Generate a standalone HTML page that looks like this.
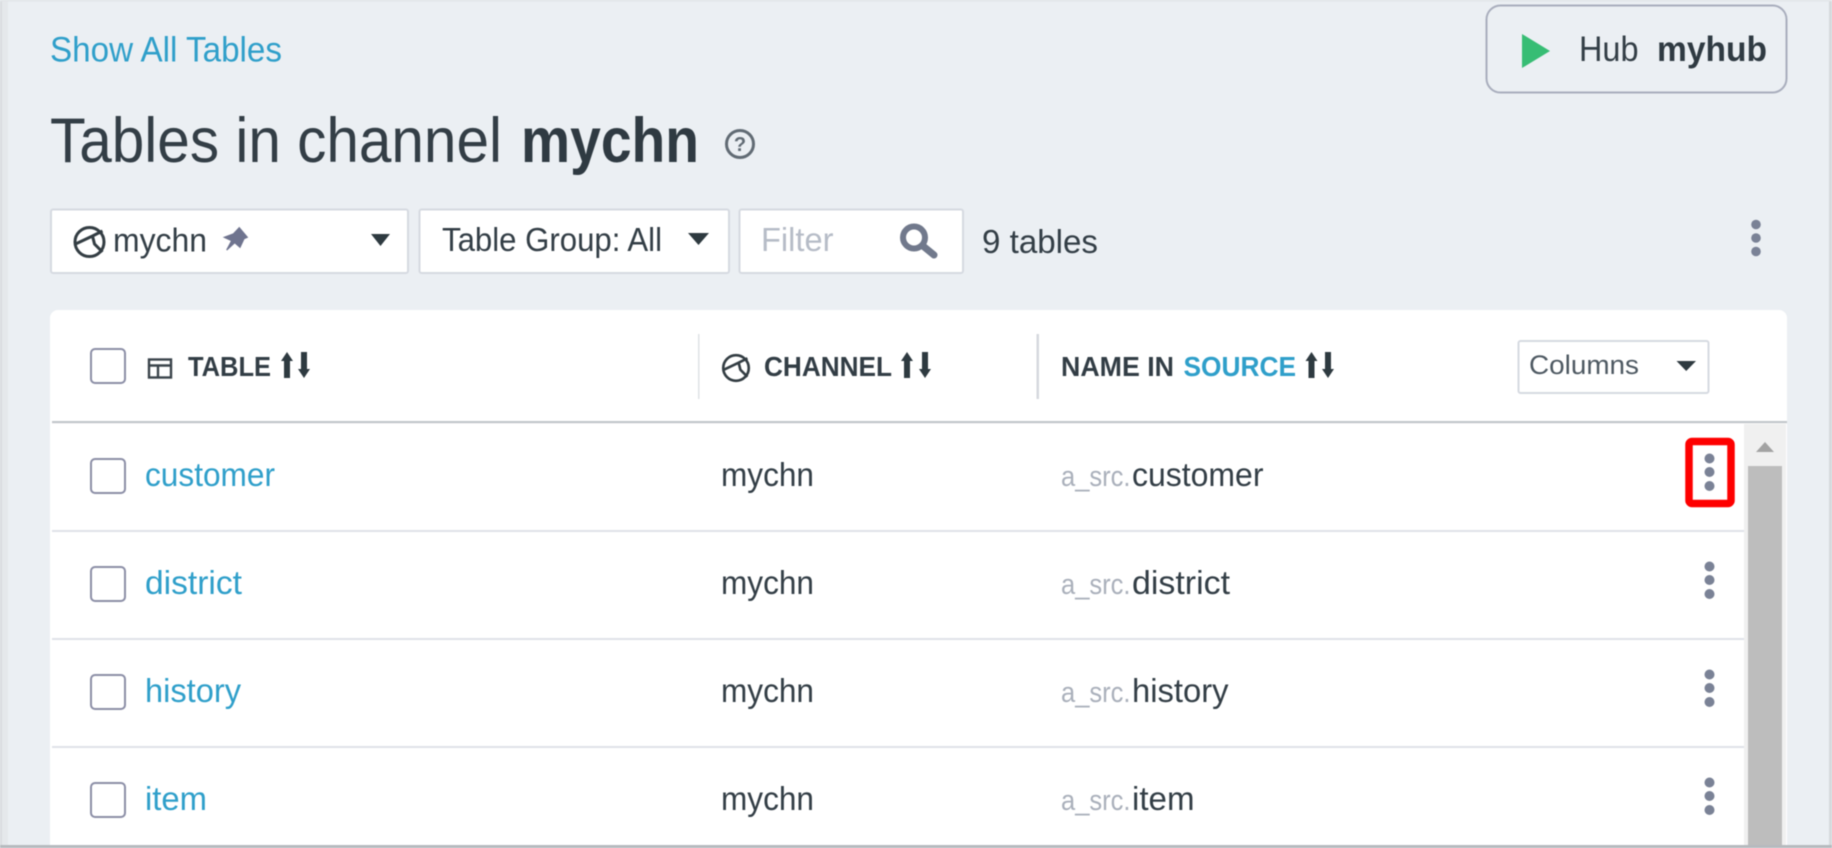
<!DOCTYPE html>
<html><head><meta charset="utf-8"><title>Tables in channel mychn</title>
<style>
html,body{margin:0;padding:0;width:1832px;height:848px;overflow:hidden;background:#ebeff3}
svg{display:block;filter:blur(.45px)}
text{font-family:"Liberation Sans",sans-serif;fill:#333e46}
.l{fill:#2f9fca}
.g{fill:#aab0bb}
.h{font-weight:bold;font-size:28px;fill:#323d45}
.r{font-size:33px}
</style></head><body>
<svg width="1832" height="848" viewBox="0 0 1832 848" xmlns="http://www.w3.org/2000/svg">
<rect width="1832" height="848" fill="#ebeff3"/>
<rect x="0" y="0" width="8" height="848" fill="#e5e8eb"/>
<rect x="0" y="0" width="2" height="848" fill="#d9dcdf"/>
<rect x="1829" y="0" width="3" height="848" fill="#d6d9dc"/>
<rect x="0" y="0" width="1832" height="1.5" fill="#e2e5e8"/>

<text class="l" x="50" y="61.5" font-size="35" textLength="232" lengthAdjust="spacingAndGlyphs">Show All Tables</text>
<text x="50" y="162" font-size="63" textLength="452" lengthAdjust="spacingAndGlyphs">Tables in channel</text>
<text x="521" y="162" font-size="63" font-weight="bold" textLength="178" lengthAdjust="spacingAndGlyphs" style="fill:#2f3a42">mychn</text>
<circle cx="740" cy="144" r="13.5" fill="none" stroke="#616b74" stroke-width="3"/>
<text x="740" y="151" font-size="20" font-weight="bold" text-anchor="middle" style="fill:#616b74">?</text>

<rect x="1486.5" y="5.5" width="300" height="87" rx="14" fill="#ebeff3" stroke="#a9aebd" stroke-width="2"/>
<path d="M1522 34L1550 51L1522 68Z" fill="#37bd74"/>
<text x="1579" y="61" font-size="35" textLength="59.5" lengthAdjust="spacingAndGlyphs">Hub</text>
<text x="1657" y="61" font-size="35" font-weight="bold" textLength="110" lengthAdjust="spacingAndGlyphs" style="fill:#2f3a42">myhub</text>

<rect x="51" y="209.5" width="357" height="63.5" rx="2" fill="#fff" stroke="#d6dae1" stroke-width="2"/>
<g transform="translate(89.5 242)" fill="none" stroke="#333d43" stroke-width="3">
<circle r="14.5"/><path d="M-14 2L3-6L13-11M3-6L5 2L13 10"/></g>
<text x="113" y="251.5" font-size="33" textLength="94" lengthAdjust="spacingAndGlyphs">mychn</text>
<path d="M239.3 227.7L247.3 237.3L244 238.7L240 247.3L234.7 242.7L226.7 250L231.7 240.7L224.3 237.3L233.3 234Z" fill="#6f748f" stroke="#6f748f" stroke-width="1.2"/>
<path d="M371 234H390L380.5 246Z" fill="#2e3a40"/>

<rect x="419.5" y="209.5" width="309.5" height="63.5" rx="2" fill="#fff" stroke="#d6dae1" stroke-width="2"/>
<text x="442" y="251" font-size="33" textLength="220" lengthAdjust="spacingAndGlyphs">Table Group: All</text>
<path d="M688 233H709L698.5 245Z" fill="#2e3a40"/>

<rect x="739.5" y="209.5" width="223.5" height="63.5" rx="2" fill="#fff" stroke="#d6dae1" stroke-width="2"/>
<text x="761" y="251" font-size="33" textLength="72.5" lengthAdjust="spacingAndGlyphs" style="fill:#b6bcc7">Filter</text>
<circle cx="914" cy="237.5" r="11" fill="none" stroke="#71798c" stroke-width="6"/>
<path d="M923 246L934 255" stroke="#71798c" stroke-width="7" stroke-linecap="round"/>

<text x="982" y="253" font-size="33" textLength="116" lengthAdjust="spacingAndGlyphs">9 tables</text>
<g fill="#7a8296"><circle cx="1756" cy="224.5" r="4.8"/><circle cx="1756" cy="238" r="4.8"/><circle cx="1756" cy="251.5" r="4.8"/></g>

<path d="M50 846V318a8 8 0 0 1 8-8H1779a8 8 0 0 1 8 8V846Z" fill="#fff"/>
<rect x="52" y="421" width="1735" height="2.2" fill="#c2c6ca"/>

<rect x="91" y="349" width="34" height="34" rx="4" fill="#fff" stroke="#8b8ea6" stroke-width="2"/>
<g fill="none" stroke="#3a444b" stroke-width="2.4"><rect x="149" y="359.5" width="22" height="18"/><path d="M149 365.5H171M158 365.5V377.5"/></g>
<text class="h" x="188" y="376" textLength="83" lengthAdjust="spacingAndGlyphs">TABLE</text>
<path d="M287 352L293 361H290V378H284V361H281Z M304 378L298 369H301V352H307V369H310Z" fill="#2e3a40"/>

<rect x="698" y="334" width="1.5" height="65" fill="#dfe2e6"/>
<g transform="translate(736 368) scale(.88)" fill="none" stroke="#333d43" stroke-width="3">
<circle r="14.5"/><path d="M-14 2L3-6L13-11M3-6L5 2L13 10"/></g>
<text class="h" x="764" y="376" textLength="128" lengthAdjust="spacingAndGlyphs">CHANNEL</text>
<path d="M907 352L913 361H910V378H904V361H901Z M925 378L919 369H922V352H928V369H931Z" fill="#2e3a40"/>

<rect x="1036.5" y="334" width="2.5" height="65" fill="#d6d9de"/>
<text class="h" x="1061" y="376" textLength="113" lengthAdjust="spacingAndGlyphs">NAME IN</text>
<text class="h" x="1183.5" y="376" textLength="112.5" lengthAdjust="spacingAndGlyphs" style="fill:#2f9fca">SOURCE</text>
<path d="M1311.5 352L1317.5 361H1314.5V378H1308.5V361H1305.5Z M1328 378L1322 369H1325V352H1331V369H1334Z" fill="#2e3a40"/>

<rect x="1518.5" y="341" width="190" height="52" rx="2" fill="#fff" stroke="#d6dae1" stroke-width="2"/>
<text x="1529" y="374" font-size="27" textLength="110" lengthAdjust="spacingAndGlyphs" style="fill:#4e5962">Columns</text>
<path d="M1676.5 361H1696L1686.2 371Z" fill="#2e3a40"/>

<g fill="#dfe2e8"><rect x="52" y="530" width="1692" height="2"/><rect x="52" y="638" width="1692" height="2"/><rect x="52" y="746" width="1692" height="2"/></g>

<g fill="#fff" stroke="#8b8ea6" stroke-width="2">
<rect x="91" y="459" width="34" height="34" rx="4"/>
<rect x="91" y="567" width="34" height="34" rx="4"/>
<rect x="91" y="675" width="34" height="34" rx="4"/>
<rect x="91" y="783" width="34" height="34" rx="4"/>
</g>

<text class="r l" x="145" y="486" textLength="130" lengthAdjust="spacingAndGlyphs">customer</text>
<text class="r l" x="145" y="594" textLength="97" lengthAdjust="spacingAndGlyphs">district</text>
<text class="r l" x="145" y="702" textLength="96" lengthAdjust="spacingAndGlyphs">history</text>
<text class="r l" x="145" y="810" textLength="62" lengthAdjust="spacingAndGlyphs">item</text>

<text class="r" x="721" y="486" textLength="93" lengthAdjust="spacingAndGlyphs">mychn</text>
<text class="r" x="721" y="594" textLength="93" lengthAdjust="spacingAndGlyphs">mychn</text>
<text class="r" x="721" y="702" textLength="93" lengthAdjust="spacingAndGlyphs">mychn</text>
<text class="r" x="721" y="810" textLength="93" lengthAdjust="spacingAndGlyphs">mychn</text>

<g font-size="29">
<text class="g" x="1061" y="486" textLength="69.5" lengthAdjust="spacingAndGlyphs">a_src.</text>
<text class="g" x="1061" y="594" textLength="69.5" lengthAdjust="spacingAndGlyphs">a_src.</text>
<text class="g" x="1061" y="702" textLength="69.5" lengthAdjust="spacingAndGlyphs">a_src.</text>
<text class="g" x="1061" y="810" textLength="69.5" lengthAdjust="spacingAndGlyphs">a_src.</text>
</g>
<text class="r" x="1132" y="486" textLength="131.5" lengthAdjust="spacingAndGlyphs">customer</text>
<text class="r" x="1132" y="594" textLength="98" lengthAdjust="spacingAndGlyphs">district</text>
<text class="r" x="1132" y="702" textLength="96.5" lengthAdjust="spacingAndGlyphs">history</text>
<text class="r" x="1132" y="810" textLength="62.5" lengthAdjust="spacingAndGlyphs">item</text>

<g fill="#7a8296">
<circle cx="1709.5" cy="458.5" r="5"/><circle cx="1709.5" cy="472" r="5"/><circle cx="1709.5" cy="486" r="5"/>
<circle cx="1709.5" cy="566.5" r="5"/><circle cx="1709.5" cy="580" r="5"/><circle cx="1709.5" cy="594" r="5"/>
<circle cx="1709.5" cy="674.5" r="5"/><circle cx="1709.5" cy="688" r="5"/><circle cx="1709.5" cy="702" r="5"/>
<circle cx="1709.5" cy="782.5" r="5"/><circle cx="1709.5" cy="796" r="5"/><circle cx="1709.5" cy="810" r="5"/>
</g>
<rect x="1689" y="441.5" width="42" height="62" rx="3" fill="none" stroke="#fe0000" stroke-width="7.5"/>

<rect x="1744" y="424" width="42" height="422" fill="#f0f0f0"/>
<rect x="1748" y="466" width="34" height="380" fill="#bdbdbd"/>
<path d="M1765 442L1774 452H1756Z" fill="#a3a3a3"/>

<rect x="0" y="845" width="1832" height="3" fill="#b6babe"/>
</svg>
</body></html>
